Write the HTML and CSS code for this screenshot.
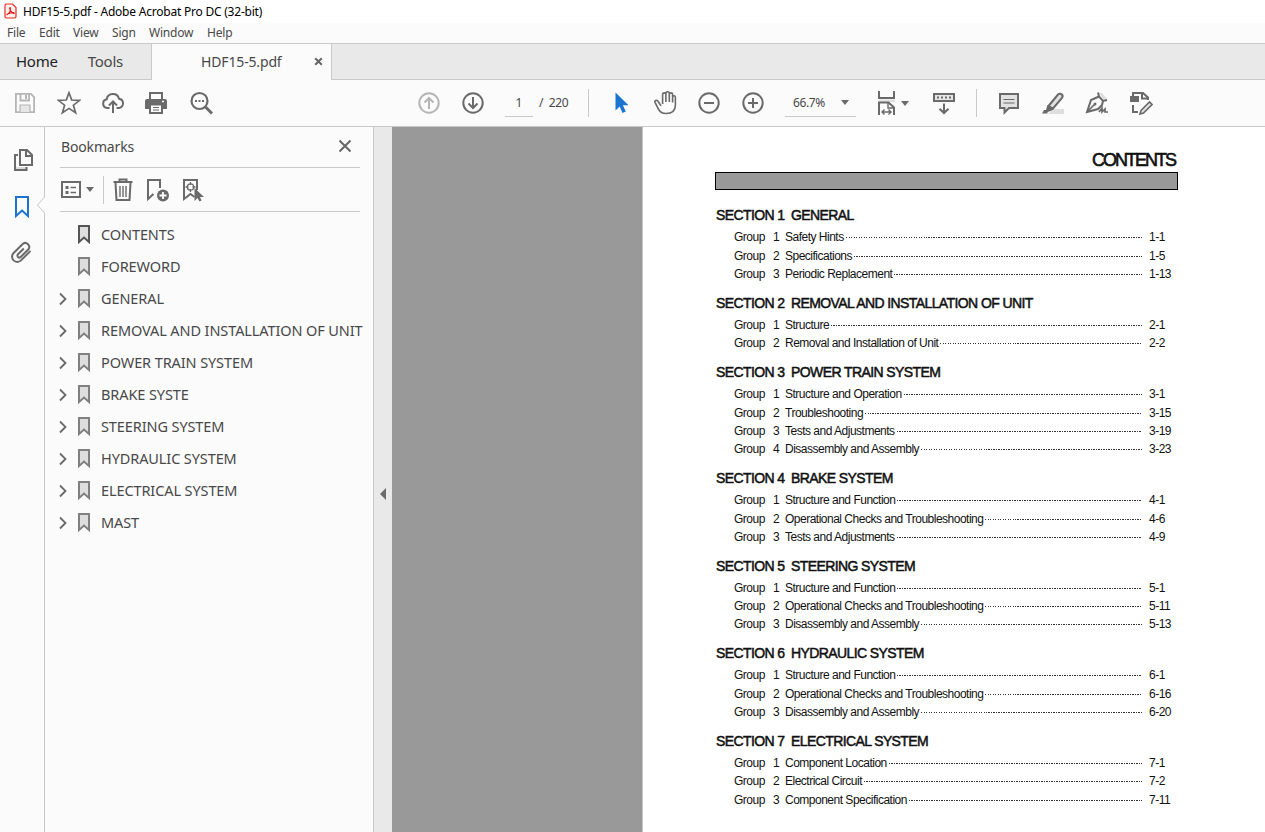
FILE: index.html
```html
<!DOCTYPE html>
<html lang="en">
  <head>
    <meta charset="UTF-8" />
    <meta name="viewport" content="width=device-width, initial-scale=1.0" />
    <title>HDF15-5.pdf - Adobe Acrobat Pro DC (32-bit)</title>
    <link rel="stylesheet" href="styles.css">
  </head>
  <body>
    <header class="title-bar">
      <svg class="app-icon" width="13" height="16" viewBox="0 0 13 16">
        <path d="M2.5 1h6L12 4.500V13.500a1.500 1.500 0 0 1-1.500 1.500h-8A1.500 1.500 0 0 1 1 13.500v-11A1.500 1.500 0 0 1 2.500 1z" fill="#fff1f0" stroke="#ec2a20" stroke-width="1.200" />
        <path d="M3.200 11.500c1.800-1 3.300-4 3.200-6.300 0-.9-1-.6-.7.500.5 2 2 4 4 4.700 1 .2.800-.8-.4-.8-2 0-4.200.7-5.900 1.500-.8.600-.5 1-.2.400z" fill="none" stroke="#e3170d" stroke-width="1.100" />
      </svg>
      <span class="window-title">HDF15-5.pdf - Adobe Acrobat Pro DC (32-bit)</span>
    </header>

    <nav class="menu-bar">
      <span>File</span>
      <span>Edit</span>
      <span>View</span>
      <span>Sign</span>
      <span>Window</span>
      <span>Help</span>
    </nav>

    <div class="tabs">
      <div class="fixed-tabs">
        <span class="tab-home">Home</span>
        <span class="tab-tools">Tools</span>
      </div>
      <div class="doc-tab">
        <span class="doc-name">HDF15-5.pdf</span>
        <svg width="9" height="9" viewBox="0 0 9 9"><path d="M1.200 1.200l6.600 6.600M7.800 1.200L1.200 7.800" stroke="#666" stroke-width="2" /></svg>
      </div>
      <div class="tabs-rest"></div>
    </div>

    <div class="toolbar">
      <div class="tools tools-file">
        <svg class="icon" viewBox="0 0 24 24"><g fill="none" stroke="#b5b5b5" stroke-width="1.800"><path d="M2.900 2.900h15l3.200 3.200v15H2.900z" /><path d="M7.500 3v6.500h8.500V3" /><path d="M7 21v-7h10v7" fill="#e6e6e6" stroke-width="1.200" /></g><path d="M12 4h2v4h-2z" fill="#b5b5b5" /></svg>
        <svg class="icon" viewBox="0 0 24 24"><path d="M12 1.700l2.700 7.300 8 .3-6.300 4.900 2.200 7.600L12 17.400l-6.600 4.400 2.200-7.600L1.300 9.300l8-.3z" fill="none" stroke="#6a6a6a" stroke-width="1.700" /></svg>
        <svg class="icon" viewBox="0 0 24 24"><g fill="none" stroke="#6a6a6a" stroke-width="2"><path d="M8.500 17H6.200A4.400 4.400 0 0 1 5.700 8.300a6.300 6.300 0 0 1 12.300-.6A4.700 4.700 0 0 1 18 17h-2.500" /><path d="M12 22V11M8 14.500l4-4 4 4" /></g></svg>
        <svg class="icon" viewBox="1 0 24 24"><path d="M6 8V2h12v6" fill="#fbfbfb" stroke="#6a6a6a" stroke-width="2" /><path d="M3 8h18a2 2 0 0 1 2 2v8h-4v-4H5v4H1v-8a2 2 0 0 1 2-2z" fill="#6a6a6a" /><path d="M6 13.500h12V22H6z" fill="#fbfbfb" stroke="#6a6a6a" stroke-width="2" /><path d="M9 16.500h6M9 19h6" stroke="#6a6a6a" /><path d="M18 10.500h2" stroke="#fff" stroke-width="1.500" /></svg>
        <svg class="icon" viewBox="0 0 24 24"><circle cx="10.500" cy="10" r="8" fill="none" stroke="#6a6a6a" stroke-width="2.200" /><path d="M16.500 16l6.500 6.500" stroke="#6a6a6a" stroke-width="3" /><path d="M6 9h2v2H6zM9.500 9h2v2h-2zM13 9h2v2h-2z" fill="#6a6a6a" /></svg>
      </div>

      <div class="tools tools-page">
        <svg class="icon" viewBox="0 0 24 24"><g fill="none" stroke="#b5b5b5" stroke-width="2"><circle cx="12" cy="12" r="9.700" /><path d="M12 18V7M7.500 11.500L12 7l4.500 4.500" /></g></svg>
        <svg class="icon" viewBox="0 0 24 24"><g fill="none" stroke="#6a6a6a" stroke-width="2"><circle cx="12" cy="12" r="9.700" /><path d="M12 6v11M7.500 12.500L12 17l4.500-4.500" /></g></svg>
      </div>
      <span class="page-number">1</span>
      <span class="page-total">/&nbsp; 220</span>
      <span class="separator sep-page"></span>

      <div class="tools tools-view">
        <svg class="icon" viewBox="0 0 24 24"><path d="M6.500 1.500v18l4.200-4 2.800 6.500 3.300-1.400-2.900-6.300H19.500z" fill="#1b74cf" /></svg>
        <svg class="icon" viewBox="-.5 .5 24 24"><path d="M7.500 15.200L4.200 10.500C3 9 .7 10 1.500 11.900l3.600 7c1.500 3 4 4.100 7.400 4.100 6 0 9.400-3 9.400-8.500V6.800c0-2-2.800-2-2.800 0V12 4c0-2.200-3.300-2.200-3.300 0v7.500V3c0-2.300-3.400-2.300-3.400 0v8.500V4c0-2.200-3.300-2.200-3.300 0v9.500" fill="none" stroke="#6a6a6a" stroke-width="1.600" /></svg>
        <svg class="icon" viewBox="0 0 24 24"><g fill="none" stroke="#6a6a6a" stroke-width="2"><circle cx="12" cy="12" r="9.700" /><path d="M7 12h10" /></g></svg>
        <svg class="icon" viewBox="0 0 24 24"><g fill="none" stroke="#6a6a6a" stroke-width="2"><circle cx="12" cy="12" r="9.700" /><path d="M7 12h10M12 7v10" /></g></svg>
      </div>
      <div class="zoom-box">
        <span>66.7%</span>
        <span class="caret"></span>
      </div>
      <div class="fit-tool">
        <svg class="icon" viewBox="-1 0 24 24"><path d="M4 8.500h16V11H4z" fill="#e2e2e2" /><g fill="none" stroke="#6a6a6a" stroke-width="2"><path d="M4 0v7h15V0M4 24V11.500h9.500l5.500 5V24" /><path d="M13 11.500v5.500h6M7 21h9M9.500 18.500L7 21l2.500 2.500M13.500 18.500L16 21l-2.500 2.500" stroke-width="1.400" /></g></svg>
        <span class="caret"></span>
      </div>
      <svg class="icon icon-scroll" viewBox="0 0 24 24"><g fill="none" stroke="#6a6a6a" stroke-width="2"><path d="M2 3h20v7H2z" fill="#e6e6e6" /><path d="M12 12.500V22M7.500 17.700L12 22l4.500-4.300" /></g><path d="M5 6.500h14" stroke="#6a6a6a" stroke-width="2" stroke-dasharray="2 2" /></svg>
      <span class="separator sep-view"></span>

      <div class="tools tools-comment">
        <svg class="icon" viewBox="0 0 24 24"><path d="M3 3h18v14h-9l-4.500 4.500V17H3z" fill="#e2e2e2" stroke="#6a6a6a" stroke-width="2" /><path d="M6.500 8.500h11M6.500 12h11" stroke="#6a6a6a" stroke-width="1.200" /></svg>
        <svg class="icon" viewBox="0 0 24 24"><path d="M12 18h11v5H7z" fill="#dedede" /><path d="M7.500 15l9.500-11.500c2.500-2 6 .5 4 3.500L12 17.500z" fill="#e2e2e2" stroke="#6a6a6a" stroke-width="2" /><path d="M6.500 14l6 4.500L9.500 20l-3 1v1.500H1L3 19h2z" fill="#6a6a6a" /></svg>
        <svg class="icon" viewBox="0 0 24 24"><path d="M14 2h3l5 6-3 1z" fill="#dedede" /><g fill="none" stroke="#6a6a6a"><path d="M13 1.500l1 4 4 4.500 4-1" stroke-width="2" /><path d="M14 5.500L6 9 2 21l11-3 4-4 1-4" stroke-width="2" /><path d="M2.500 20.500l7-7M14 21l3-4v4l3-3v3h3" stroke-width="1.700" /></g><circle cx="10" cy="13" r="1.500" fill="#6a6a6a" /></svg>
        <svg class="icon" viewBox="0 0 24 24"><g fill="none" stroke="#6a6a6a" stroke-width="2"><path d="M4 5V2h10l5 4.500V9M13 2v5.500h6M4 14v7h5" /><path d="M12 19.500l8.500-8.500 2.500 2.500-8.500 8.500-3.500 1z" fill="#e2e2e2" stroke-width="1.600" /></g><path d="M1 5h9v6H1z" fill="#6a6a6a" /></svg>
      </div>
    </div>

    <div class="workspace">
      <aside class="rail">
        <svg class="icon" viewBox="-1 1 24 24"><path d="M4 19h11v3H4z" fill="#dedede" /><g fill="none" stroke="#6a6a6a" stroke-width="2"><path d="M9 2h7l5 5v10H9zM15 2v6h6" /><path d="M7 7H4v15h11.500v-3" /></g></svg>
        <svg class="icon" viewBox="0 0 24 24"><path d="M6 2h12v19l-6-5.500L6 21z" fill="none" stroke="#1b74cf" stroke-width="2" /></svg>
        <svg class="icon" viewBox="0 1 24 24"><path d="M13.800 8.500L8 14.300a1.900 1.900 0 0 0 2.700 2.700l7.500-7.500a3.900 3.900 0 0 0-5.500-5.500L3.600 13a5.200 5.200 0 0 0 7.400 7.400l9.500-9.500" fill="none" stroke="#6a6a6a" stroke-width="2" /></svg>
        <svg class="rail-notch" width="9" height="18" viewBox="0 0 9 18"><path d="M9 1v16L1.500 9z" fill="#fbfbfb" /><path d="M8.500 1L1.500 9l7 8" fill="none" stroke="#c9c9c9" /></svg>
      </aside>

      <section class="bookmarks">
        <div class="panel-head">
          <h2>Bookmarks</h2>
          <svg width="14" height="14" viewBox="0 0 14 14"><path d="M1.500 1.500l11 11M12.500 1.500l-11 11" stroke="#666" stroke-width="2" /></svg>
        </div>
        <div class="panel-tools">
          <svg class="list-icon" width="20" height="18" viewBox="0 0 20 18"><path d="M1 1h18v15H1z" fill="none" stroke="#6a6a6a" stroke-width="2" /><path d="M4.500 5h3v3h-3zM4.500 10h3v3h-3z" fill="#6a6a6a" /><path d="M9.500 6.500H15M9.500 11.500H15" stroke="#6a6a6a" stroke-width="1.500" /></svg>
          <span class="caret"></span>
          <span class="separator sep-panel"></span>
          <svg class="icon" viewBox="0 0 24 24"><g fill="none" stroke="#6a6a6a" stroke-width="2"><path d="M2.500 4h19M8.500 4V1.500h7V4M4.500 5l1 17h13l1-17" /><path d="M9 8v11M12 8v11M15 8v11" stroke-width="1.400" /></g></svg>
          <svg class="icon" viewBox="1 0 24 24"><path d="M15 10V2H3v19l5.500-5" fill="none" stroke="#6a6a6a" stroke-width="2" /><circle cx="18" cy="17.500" r="6" fill="#6a6a6a" /><path d="M14.500 17.500h7M18 14v7" stroke="#fff" stroke-width="1.800" /></svg>
          <svg class="icon" viewBox="0 0 24 24"><g fill="none" stroke="#6a6a6a"><path d="M16 12V2H3v19l6.500-5 4 3" stroke-width="2" /><circle cx="9.500" cy="9" r="3.200" stroke-width="1.300" /><path d="M9.500 4v3M9.500 11v3M4.500 9h3M11.500 9h3" stroke-width="1.300" /></g><path d="M13.500 10v13l3-3 2 3.500 2-1-1.500-3.500h4z" fill="#6a6a6a" /></svg>
        </div>
        <ul class="bookmark-list" id="bookmark-list"></ul>
      </section>

      <div class="splitter"><span class="collapse"></span></div>

      <main class="viewer">
        <article class="page">
          <h1>CONTENTS</h1>
          <div class="banner"></div>
          <div id="toc"></div>
        </article>
      </main>
    </div>

    <script src="script.js"></script>
  </body>
</html>
```
FILE: styles.css
```css
* {
  margin: 0;
  padding: 0;
  box-sizing: border-box;
}

body {
  font-family: "Noto Sans", "Open Sans", sans-serif;
  background: #fbfbfb;
  color: #484848;
  display: flex;
  flex-direction: column;
  height: 100vh;
  overflow: hidden;
}

svg {
  display: block;
  flex: none;
}

span {
  white-space: nowrap;
}

.icon {
  width: 24px;
  height: 24px;
}

.caret {
  width: 0;
  height: 0;
  border: 4px solid transparent;
  border-top: 5px solid #6a6a6a;
  border-bottom: 0;
}

.separator {
  width: 1px;
  height: 28px;
  background: #c9c9c9;
}

/* title and menu */
.title-bar {
  height: 23px;
  flex: none;
  background: #fff;
  color: #000;
  display: flex;
  align-items: center;
  padding-left: 4px;
  font-size: 12px;
}

.app-icon {
  margin-top: -2px;
}

.window-title {
  margin-left: 6px;
  letter-spacing: -0.22px;
}

.menu-bar {
  height: 20px;
  flex: none;
  display: grid;
  grid-template-columns: 32px 34px 39px 37px 58px auto;
  align-items: center;
  padding: 0 0 2px 7px;
  font-size: 12px;
  letter-spacing: -0.2px;
}

/* tabs */
.tabs {
  height: 37px;
  flex: none;
  display: flex;
  font-size: 15px;
}

.fixed-tabs {
  width: 151px;
  background: #e9e9e9;
  border-top: 1px solid #c9c9c9;
  border-bottom: 1px solid #c9c9c9;
  display: flex;
  align-items: center;
  padding: 0 0 2px 16px;
  gap: 30px;
  letter-spacing: -0.25px;
}

.tab-home {
  color: #222;
}

.doc-tab {
  width: 181px;
  border: 1px solid #c9c9c9;
  border-bottom: 0;
  display: flex;
  align-items: center;
  justify-content: space-between;
  padding: 0 8px 1px 49px;
  font-size: 14px;
  letter-spacing: -0.15px;
}

.tabs-rest {
  flex: 1;
  background: #e9e9e9;
  border-top: 1px solid #c9c9c9;
  border-bottom: 1px solid #c9c9c9;
}

/* toolbar */
.toolbar {
  height: 47px;
  flex: none;
  display: flex;
  align-items: center;
  border-bottom: 1px solid #c9c9c9;
  font-size: 12px;
}

.tools {
  display: flex;
  gap: 20px;
}

.tools-file {
  margin-left: 13px;
}

.tools-page {
  margin-left: 204px;
}

.page-number {
  width: 28px;
  height: 28px;
  line-height: 27px;
  margin-left: 20px;
  text-align: center;
  border-bottom: 1px solid #c9c9c9;
}

.page-total {
  margin: -1px 0 0 6px;
  width: 30px;
  letter-spacing: -0.35px;
}

.sep-page {
  margin-left: 19px;
}

.tools-view {
  margin-left: 20px;
}

.zoom-box {
  width: 71px;
  height: 28px;
  margin-left: 20px;
  padding: 0 7px 0 8px;
  display: flex;
  align-items: center;
  justify-content: space-between;
  border-bottom: 1px solid #c9c9c9;
  letter-spacing: -0.4px;
}

.fit-tool {
  margin-left: 18px;
  display: flex;
  align-items: center;
  gap: 3px;
}

.icon-scroll {
  margin-left: 23px;
}

.sep-view {
  margin-left: 20px;
}

.tools-comment {
  margin-left: 20px;
}

/* navigation pane */
.workspace {
  flex: 1;
  min-height: 0;
  display: flex;
}

.rail {
  width: 45px;
  flex: none;
  position: relative;
  border-right: 1px solid #c9c9c9;
  display: flex;
  flex-direction: column;
  gap: 22px;
  padding: 22px 0 0 10px;
}

.rail-notch {
  position: absolute;
  right: -1px;
  top: 69px;
}

.bookmarks {
  width: 329px;
  flex: none;
  border-right: 1px solid #c9c9c9;
}

.panel-head {
  height: 41px;
  margin: 0 13px 0 15px;
  border-bottom: 1px solid #c9c9c9;
  display: flex;
  align-items: center;
  justify-content: space-between;
  padding: 0 8px 2px 1px;
}

.panel-head h2 {
  font-size: 14px;
  font-weight: normal;
  letter-spacing: -0.15px;
}

.panel-tools {
  height: 44px;
  margin: 0 13px 0 15px;
  border-bottom: 1px solid #c9c9c9;
  display: flex;
  align-items: center;
  padding-left: 1px;
}

.panel-tools .caret {
  margin-left: 5px;
}

.sep-panel {
  margin: 0 7px 0 9px;
}

.panel-tools .icon + .icon {
  margin-left: 11px;
}

.bookmark-list {
  list-style: none;
  padding: 6px 0 0 13px;
}

.bookmark-list li {
  height: 32px;
  display: grid;
  grid-template-columns: 20px 23px auto;
  align-items: center;
  font-size: 14.5px;
  letter-spacing: -0.1px;
}

.bookmark-list .arrow {
  margin-top: 1px;
}

.splitter {
  width: 18px;
  flex: none;
  background: #e9e9e9;
  display: flex;
  align-items: center;
  padding: 28px 0 0 6px;
}

.collapse {
  border: 6px solid transparent;
  border-right: 6px solid #6a6a6a;
  border-left: 0;
}

/* document */
.viewer {
  flex: 1;
  background: #999;
  display: flex;
  justify-content: flex-end;
}

.page {
  width: 623px;
  background: #fff;
  border-left: 1px solid #c9c9c9;
  padding: 22px 87px 0 72px;
  color: #111;
  font-family: "Liberation Sans", Arial, sans-serif;
}

.page h1 {
  font-size: 18px;
  line-height: 23px;
  padding-right: 3px;
  font-weight: normal;
  letter-spacing: -2px;
  text-align: right;
  -webkit-text-stroke: 0.6px #111;
}

.banner {
  height: 18px;
  background: #999;
  border: 1px solid #000;
  margin-bottom: 14.3px;
}

.toc-section {
  margin-bottom: 8.5px;
}

.toc-section h3 {
  height: 24.2px;
  line-height: 23.2px;
  padding-left: 1px;
  font-size: 14px;
  font-weight: normal;
  letter-spacing: -0.6px;
  display: flex;
  gap: 6.5px;
  -webkit-text-stroke: 0.5px #111;
}

.toc-row {
  height: 18.3px;
  line-height: 18px;
  font-size: 12px;
  letter-spacing: -0.5px;
  display: grid;
  grid-template-columns: 39px 12px auto 1fr 29px;
  padding-left: 19px;
}

.leader {
  height: 1px;
  margin: 9px 7px 0 2px;
  background: repeating-linear-gradient(90deg, #333 0 1.2px, transparent 1.2px 2.5px);
}
```
FILE: script.js
```js
const bookmarks = [
  "CONTENTS",
  "FOREWORD",
  "GENERAL",
  "REMOVAL AND INSTALLATION OF UNIT",
  "POWER TRAIN SYSTEM",
  "BRAKE SYSTE",
  "STEERING SYSTEM",
  "HYDRAULIC SYSTEM",
  "ELECTRICAL SYSTEM",
  "MAST",
];

const sections = [
  ["GENERAL", [["Safety Hints", "1-1"], ["Specifications", "1-5"], ["Periodic Replacement", "1-13"]]],
  ["REMOVAL AND INSTALLATION OF UNIT", [["Structure", "2-1"], ["Removal and Installation of Unit", "2-2"]]],
  ["POWER TRAIN SYSTEM", [["Structure and Operation", "3-1"], ["Troubleshooting", "3-15"], ["Tests and Adjustments", "3-19"], ["Disassembly and Assembly", "3-23"]]],
  ["BRAKE SYSTEM", [["Structure and Function", "4-1"], ["Operational Checks and Troubleshooting", "4-6"], ["Tests and Adjustments", "4-9"]]],
  ["STEERING SYSTEM", [["Structure and Function", "5-1"], ["Operational Checks and Troubleshooting", "5-11"], ["Disassembly and Assembly", "5-13"]]],
  ["HYDRAULIC SYSTEM", [["Structure and Function", "6-1"], ["Operational Checks and Troubleshooting", "6-16"], ["Disassembly and Assembly", "6-20"]]],
  ["ELECTRICAL SYSTEM", [["Component Location", "7-1"], ["Electrical Circuit", "7-2"], ["Component Specification", "7-11"]]],
];

document.getElementById("bookmark-list").innerHTML = bookmarks
  .map((name, i) => {
    // the first two entries have no children
    const arrow = i > 1 ? '<path d="M2 1.500l5.500 5.500L2 12.500" fill="none" stroke="#6a6a6a" stroke-width="1.800" />' : "";
    const color = i === 0 ? "#555" : "#808080";
    return `<li>
      <svg class="arrow" width="10" height="14" viewBox="0 0 10 14">${arrow}</svg>
      <svg width="12" height="19" viewBox="0 0 12 19"><path d="M1 1h10v16l-5-4.500L1 17z" fill="#dedede" stroke="${color}" stroke-width="2" /></svg>
      <span>${name}</span>
    </li>`;
  })
  .join("");

document.getElementById("toc").innerHTML = sections
  .map(([title, groups], i) => {
    const rows = groups
      .map(([name, page], j) => `<div class="toc-row">
        <span>Group</span><span>${j + 1}</span><span>${name}</span><span class="leader"></span><span>${page}</span>
      </div>`)
      .join("");
    return `<div class="toc-section"><h3><span>SECTION ${i + 1}</span><span>${title}</span></h3>${rows}</div>`;
  })
  .join("");
```
